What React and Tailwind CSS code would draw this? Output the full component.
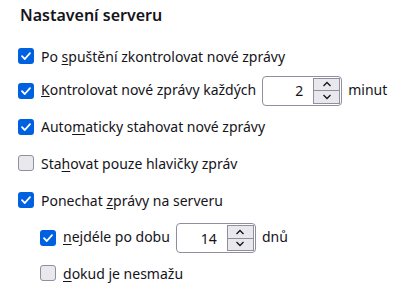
const font = { fontFamily: '"Noto Sans", "Open Sans", sans-serif' };

function Check({ checked }) {
  if (!checked) {
    return <span className="w-4 h-4 shrink-0 rounded-[3px] border border-[#8f8f9d] bg-[#e9e9ed]"></span>;
  }
  return (
    <span className="w-4 h-4 shrink-0 rounded-[3px] bg-[#0061e0] flex items-center justify-center">
      <svg width="12" height="12" viewBox="0 0 12 12" fill="none">
        <path d="M2 6.2 L4.8 9 L10 3.2" stroke="white" strokeWidth="1.8" strokeLinecap="round" strokeLinejoin="round" />
      </svg>
    </span>
  );
}

function Spin({ value }) {
  return (
    <span className="inline-flex align-middle items-center h-[30px] w-[80px] rounded-[4px] border border-[#8f8f9d] bg-white mx-[6px]">
      <span className="flex-1 text-right pr-[10px]">{value}</span>
      <span className="flex flex-col w-[27px] h-[26px] mr-[1px] border border-[#8f8f9d] bg-[#e9e9ed]">
        <span className="flex-1 flex items-center justify-center border-b border-[#8f8f9d]">
          <svg width="10" height="6" viewBox="0 0 10 6"><path d="M1.5 5 L5 1.5 L8.5 5" stroke="#15141a" strokeWidth="1.3" fill="none" /></svg>
        </span>
        <span className="flex-1 flex items-center justify-center">
          <svg width="10" height="6" viewBox="0 0 10 6"><path d="M1.5 1 L5 4.5 L8.5 1" stroke="#15141a" strokeWidth="1.3" fill="none" /></svg>
        </span>
      </span>
    </span>
  );
}

function Row({ checked, indent, h, children }) {
  return (
    <div className={`flex items-center ${indent ? 'pl-[22px]' : ''} ${h}`}>
      <Check checked={checked} />
      <span className="ml-[7px] whitespace-nowrap">{children}</span>
    </div>
  );
}

export default function App() {
  return (
    <div className="w-[401px] h-[299px] bg-white text-[#15141a] text-[14px] pl-[18px]" style={font}>
      <h2 className="text-[16px] leading-[22px] font-semibold h-[39px] pt-[4px] pl-[2px]">Nastavení serveru</h2>
      <Row checked h="h-[34px]">Po <u className="underline-offset-2">s</u>puštění zkontrolovat nové zprávy</Row>
      <Row checked h="h-[35px]"><u className="underline-offset-2">K</u>ontrolovat nové zprávy každých<Spin value="2" />minut</Row>
      <Row checked h="h-[37px]">Auto<u className="underline-offset-2">m</u>aticky stahovat nové zprávy</Row>
      <Row h="h-[36px]">Sta<u className="underline-offset-2">h</u>ovat pouze hlavičky zpráv</Row>
      <Row checked h="h-[38px]">Ponechat <u className="underline-offset-2">z</u>právy na serveru</Row>
      <Row checked indent h="h-[38px]"><u className="underline-offset-2">n</u>ejdéle po dobu<Spin value="14" />dnů</Row>
      <Row indent h="h-[32px]"><u className="underline-offset-2">d</u>okud je nesmažu</Row>
    </div>
  );
}
